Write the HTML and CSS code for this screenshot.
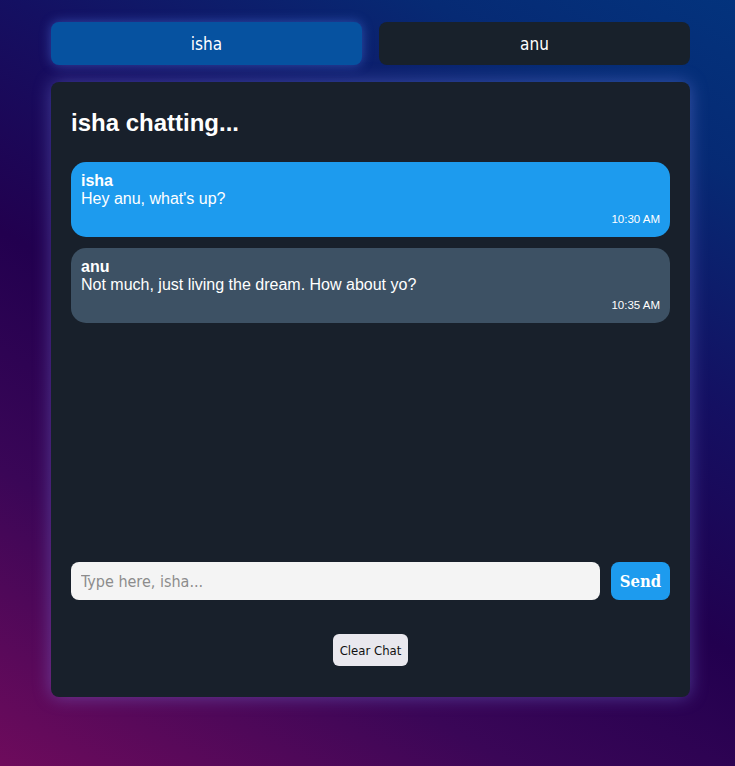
FILE: index.html
```html
<!DOCTYPE html>
<html lang="en">
<head>
<meta charset="utf-8">
<title>Chat</title>
<link rel="stylesheet" href="styles.css">
</head>
<body>
<div class="app">
  <div class="tabs">
    <button class="tab tab-active">isha</button>
    <button class="tab">anu</button>
  </div>
  <div class="panel">
    <h2 class="title">isha chatting...</h2>
    <div class="messages">
      <div class="bubble bubble-blue">
        <div class="sender">isha</div>
        <div class="text">Hey anu, what's up?</div>
        <div class="time">10:30 AM</div>
      </div>
      <div class="bubble bubble-gray">
        <div class="sender">anu</div>
        <div class="text">Not much, just living the dream. How about yo?</div>
        <div class="time">10:35 AM</div>
      </div>
    </div>
    <div class="composer">
      <input class="input" type="text" placeholder="Type here, isha...">
      <button class="send">Send</button>
    </div>
    <div class="clear-row">
      <button class="clear">Clear Chat</button>
    </div>
  </div>
</div>
</body>
</html>
```

FILE: styles.css
```css
html, body {
  margin: 0;
  padding: 0;
  height: 100%;
}

body {
  background: linear-gradient(30deg, #6e0b5c 0%, #3a0657 25%, #22004f 45%, #141062 65%, #062a74 85%, #03337d 100%);
  font-family: "Liberation Sans", Arial, sans-serif;
  overflow: hidden;
}

.app {
  width: 639px;
  margin: 0 0 0 51px;
  padding-top: 22px;
}

.tabs {
  display: grid;
  grid-template-columns: 1fr 1fr;
  gap: 17px;
}

.tab {
  height: 43px;
  border: none;
  border-radius: 8px;
  background: #18212b;
  color: #ffffff;
  font-family: "DejaVu Sans Condensed", "DejaVu Sans", sans-serif;
  font-size: 17px;
  padding: 0;
}

.tab-active {
  background: #0652a0;
  box-shadow: 0 0 12px rgba(90, 140, 255, 0.45);
}

.panel {
  margin-top: 17px;
  height: 615px;
  box-sizing: border-box;
  background: #18202b;
  border-radius: 8px;
  padding: 20px 20px 31px;
  display: flex;
  flex-direction: column;
  box-shadow: 0 0 18px rgba(140, 150, 255, 0.38);
}

.title {
  margin: 7px 0 25px;
  font-size: 24px;
  line-height: 27.6px;
  font-weight: bold;
  color: #ffffff;
}

.messages {
  flex: 1;
  display: flex;
  flex-direction: column;
  gap: 10.5px;
}

.bubble {
  border-radius: 15px;
  padding: 10px;
  color: #ffffff;
}

.bubble-blue {
  background: #1d9bee;
}

.bubble-gray {
  background: #3d5164;
}

.sender {
  font-weight: bold;
  font-size: 16px;
  line-height: 18.4px;
}

.text {
  font-size: 16px;
  line-height: 18.4px;
}

.time {
  margin-top: 5px;
  text-align: right;
  font-size: 11.5px;
  line-height: 13.6px;
}

.composer {
  display: flex;
  gap: 11px;
  height: 38px;
}

.input {
  flex: 1;
  height: 38px;
  box-sizing: border-box;
  border: none;
  border-radius: 8px;
  background: #f4f4f4;
  padding: 0 10px;
  font-family: "DejaVu Sans Condensed", "DejaVu Sans", sans-serif;
  font-size: 16px;
  color: #222;
  outline: none;
}

.input::placeholder {
  color: #8c8c8c;
}

.send {
  width: 59px;
  height: 38px;
  border: none;
  border-radius: 8px;
  background: #1d9bee;
  color: #ffffff;
  font-family: "DejaVu Serif Condensed", "DejaVu Serif", serif;
  font-weight: bold;
  font-size: 16.5px;
  padding: 0;
}

.clear-row {
  display: flex;
  justify-content: center;
  margin-top: 34px;
}

.clear {
  width: 75px;
  height: 32px;
  border: none;
  border-radius: 6px;
  background: #e9e8ee;
  color: #111111;
  font-family: "DejaVu Sans Condensed", "DejaVu Sans", sans-serif;
  font-size: 13px;
  padding: 0;
}
```
